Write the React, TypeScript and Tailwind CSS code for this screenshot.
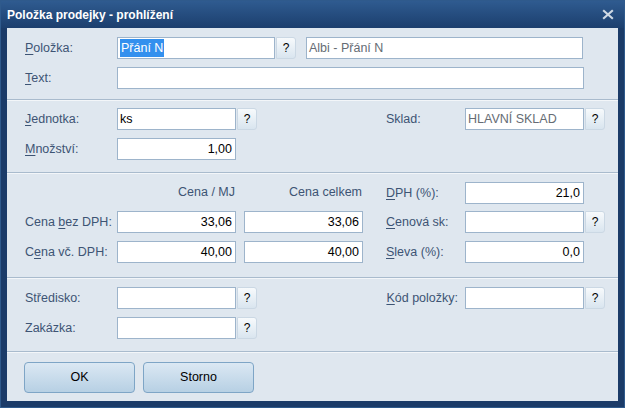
import React from 'react';

const font = { fontFamily: '"Liberation Sans", Arial, sans-serif' };

// label with underlined access key
const Label: React.FC<{ text: string; u?: number; w: string; right?: boolean }> = ({ text, u, w, right }) => (
    <div className={`${w} shrink-0 whitespace-nowrap text-[12.5px] text-[#3d5474] ${right ? 'text-right pr-[7px]' : ''}`}>
        {u === undefined ? text : (
            <>
                {text.slice(0, u)}
                <span className="underline underline-offset-2">{text[u]}</span>
                {text.slice(u + 1)}
            </>
        )}
    </div>
);

const Field: React.FC<{ w: string; value?: string; right?: boolean; grey?: boolean; selected?: boolean }> = ({ w, value, right, grey, selected }) => (
    <div className={`${w} h-[22px] shrink-0 bg-white border border-[#9db4cb] flex items-center px-[2px] whitespace-nowrap text-[12.5px] ${right ? 'justify-end pr-[3px]' : ''} ${grey ? 'text-[#666c74]' : 'text-black'}`}>
        {selected ? <span className="bg-[#3390ee] text-white px-px">{value}</span> : value}
    </div>
);

const Q: React.FC = () => (
    <div className="w-[20px] h-[22px] shrink-0 ml-px rounded-r-[3px] border border-[#cbd8e4] bg-gradient-to-b from-[#f7fafc] to-[#d9e5ef] flex items-center justify-center text-[12px] text-black">
        ?
    </div>
);

const Sep: React.FC = () => (
    <div>
        <div className="h-px bg-[#a9bbcd]" />
        <div className="h-px bg-[#f3f6f9]" />
    </div>
);

const Btn: React.FC<{ text: string }> = ({ text }) => (
    <div className="w-[111px] h-[31px] rounded-[4px] border border-[#7ea5c6] bg-gradient-to-b from-[#dbe8f3] to-[#b7d0e4] flex items-center justify-center text-[12.5px] text-black">
        {text}
    </div>
);

export default function App() {
    return (
        <div className="w-[625px] h-[408px] bg-[#1b3b68] flex flex-col border border-[#2f5a8c]" style={font}>
            <div className="h-[27px] shrink-0 flex items-center justify-between pl-[6px] pr-[10px] bg-gradient-to-b from-[#2f5b90] to-[#1c3f6e]">
                <span className="text-white font-bold text-[12px]">Položka prodejky - prohlížení</span>
                <svg width="12" height="11" viewBox="0 0 12 11">
                    <path d="M2 2 L10 9 M10 2 L2 9" stroke="#cfd9e4" strokeWidth="2.2" strokeLinecap="square" />
                </svg>
            </div>
            <div className="flex-1 mx-[6px] mb-[6px] bg-[#dfe7ef] flex flex-col">
                {/* item */}
                <div className="pl-[18px] pt-[9px] pb-[10px] flex flex-col gap-[8px]">
                    <div className="flex items-center">
                        <Label text="Položka:" u={0} w="w-[92px]" />
                        <Field w="w-[158px]" value="Přání N" selected />
                        <Q />
                        <div className="w-[10px]" />
                        <Field w="w-[277px]" value="Albi - Přání N" grey />
                    </div>
                    <div className="flex items-center">
                        <Label text="Text:" u={0} w="w-[92px]" />
                        <Field w="w-[467px]" />
                    </div>
                </div>
                <Sep />
                {/* unit / stock */}
                <div className="pl-[18px] pt-[7px] pb-[12px] flex flex-col gap-[8px]">
                    <div className="flex items-center">
                        <div className="w-[361px] flex items-center">
                            <Label text="Jednotka:" u={0} w="w-[92px]" />
                            <Field w="w-[119px]" value="ks" />
                            <Q />
                        </div>
                        <Label text="Sklad:" w="w-[79px]" />
                        <Field w="w-[119px]" value="HLAVNÍ SKLAD" grey />
                        <Q />
                    </div>
                    <div className="flex items-center">
                        <Label text="Množství:" u={0} w="w-[92px]" />
                        <Field w="w-[119px]" value="1,00" right />
                    </div>
                </div>
                <Sep />
                {/* prices */}
                <div className="pl-[18px] pt-[8px] pb-[14px] flex flex-col">
                    <div className="flex items-end">
                        <div className="w-[361px] flex items-center text-[12.5px] text-[#3d5474] pb-[2px]">
                            <div className="w-[92px]" />
                            <div className="w-[119px] text-right pr-[1px]">Cena / MJ</div>
                            <div className="w-[8px]" />
                            <div className="w-[119px] text-right pr-[1px]">Cena celkem</div>
                        </div>
                        <div className="flex items-center">
                            <Label text="DPH (%):" u={0} w="w-[79px]" />
                            <Field w="w-[119px]" value="21,0" right />
                        </div>
                    </div>
                    <div className="flex items-center mt-[7px]">
                        <div className="w-[361px] flex items-center">
                            <Label text="Cena bez DPH:" u={5} w="w-[92px]" />
                            <Field w="w-[119px]" value="33,06" right />
                            <div className="w-[8px]" />
                            <Field w="w-[119px]" value="33,06" right />
                        </div>
                        <Label text="Cenová sk:" u={0} w="w-[79px]" />
                        <Field w="w-[119px]" />
                        <Q />
                    </div>
                    <div className="flex items-center mt-[8px]">
                        <div className="w-[361px] flex items-center">
                            <Label text="Cena vč. DPH:" u={1} w="w-[92px]" />
                            <Field w="w-[119px]" value="40,00" right />
                            <div className="w-[8px]" />
                            <Field w="w-[119px]" value="40,00" right />
                        </div>
                        <Label text="Sleva (%):" u={0} w="w-[79px]" />
                        <Field w="w-[119px]" value="0,0" right />
                    </div>
                </div>
                <Sep />
                {/* centre / order */}
                <div className="pl-[18px] pt-[8px] pb-[12px] flex flex-col gap-[8px]">
                    <div className="flex items-center">
                        <div className="w-[361px] flex items-center">
                            <Label text="Středisko:" w="w-[92px]" />
                            <Field w="w-[119px]" />
                            <Q />
                        </div>
                        <Label text="Kód položky:" u={0} w="w-[79px]" right />
                        <Field w="w-[119px]" />
                        <Q />
                    </div>
                    <div className="flex items-center">
                        <Label text="Zakázka:" w="w-[92px]" />
                        <Field w="w-[119px]" />
                        <Q />
                    </div>
                </div>
                <Sep />
                <div className="pl-[17px] pt-[9px] flex gap-[8px]">
                    <Btn text="OK" />
                    <Btn text="Storno" />
                </div>
            </div>
        </div>
    );
}
